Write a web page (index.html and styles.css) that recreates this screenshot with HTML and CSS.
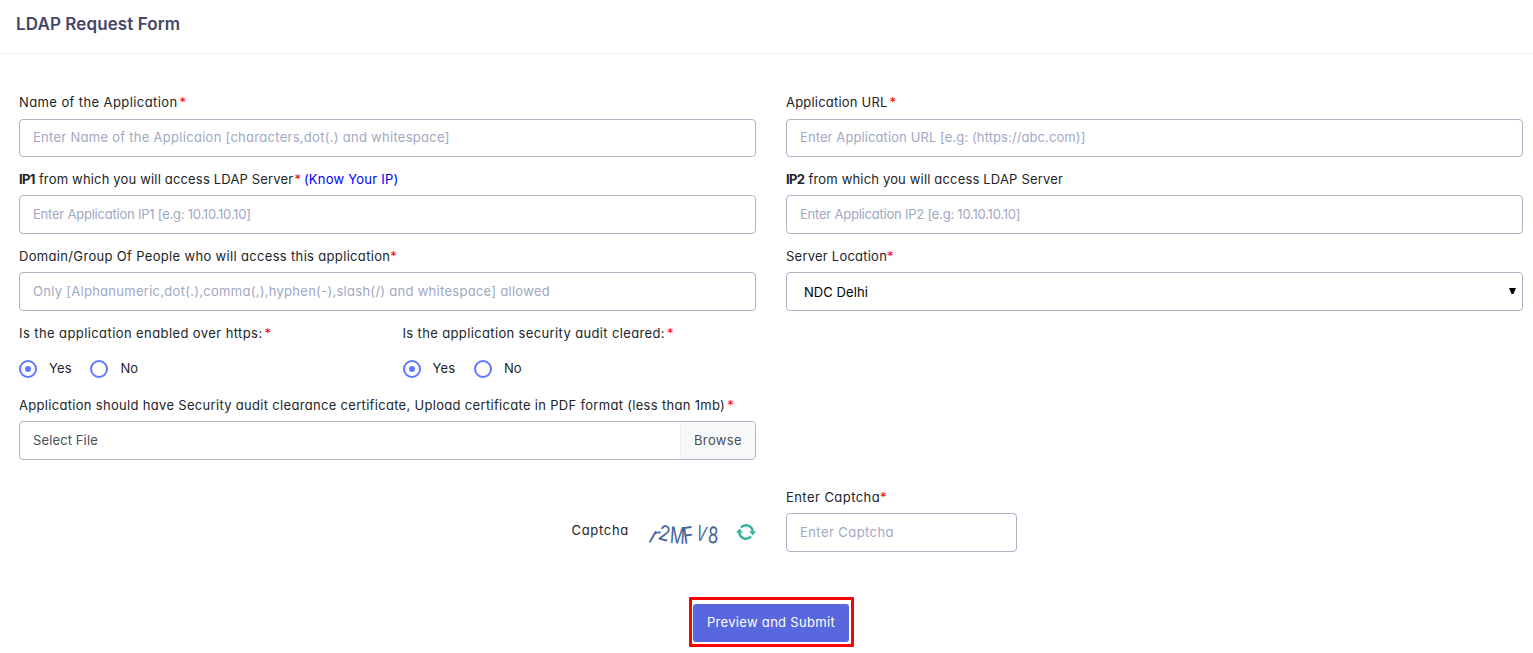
FILE: index.html
```html
<!DOCTYPE html>
<html lang="en">
<head>
<meta charset="utf-8">
<title>LDAP Request Form</title>
<link rel="stylesheet" href="styles.css">
</head>
<body>
<header class="page-header"><h1 class="page-title">LDAP Request Form</h1></header>
<form class="form">
  <div class="row">
    <div class="field">
      <label class="label tall name-label"><span>Name of the Application</span><i class="req spaced">*</i></label>
      <input class="control short name-input" placeholder="Enter Name of the Applicaion [characters,dot(.) and whitespace]">
    </div>
    <div class="field">
      <label class="label tall url-label"><span>Application URL</span><i class="req spaced">*</i></label>
      <input class="control short url-input" placeholder="Enter Application URL [e.g: (https://abc.com)]">
    </div>
  </div>
  <div class="row">
    <div class="field">
      <label class="label ip-label"><b>IP1</b><span>from which you will access LDAP Server</span><i class="req ip-req">*</i><a class="ip-link">(Know Your IP)</a></label>
      <input class="control ip-input" placeholder="Enter Application IP1 [e.g: 10.10.10.10]">
    </div>
    <div class="field">
      <label class="label ip-label"><b>IP2</b><span>from which you will access LDAP Server</span></label>
      <input class="control ip-input" placeholder="Enter Application IP2 [e.g: 10.10.10.10]">
    </div>
  </div>
  <div class="row">
    <div class="field">
      <label class="label domain-label"><span>Domain/Group Of People who will access this application</span><i class="req">*</i></label>
      <input class="control name-input" placeholder="Only [Alphanumeric,dot(.),comma(,),hyphen(-),slash(/) and whitespace] allowed">
    </div>
    <div class="field">
      <label class="label location-label"><span>Server Location</span><i class="req">*</i></label>
      <div class="control select"><span>NDC Delhi</span><svg class="caret" width="7" height="6" viewBox="0 0 7 6"><path d="M0 0H7L4.4 6H2.6Z"/></svg></div>
    </div>
  </div>
  <div class="row questions">
    <div class="question">
      <label class="label https-label"><span>Is the application enabled over https:</span><i class="req spaced">*</i></label>
      <div class="radios">
        <label class="radio"><span class="ring on"></span><span class="choice">Yes</span></label>
        <label class="radio"><span class="ring"></span><span class="choice">No</span></label>
      </div>
    </div>
    <div class="question">
      <label class="label audit-label"><span>Is the application security audit cleared:</span><i class="req spaced">*</i></label>
      <div class="radios">
        <label class="radio"><span class="ring on"></span><span class="choice">Yes</span></label>
        <label class="radio"><span class="ring"></span><span class="choice">No</span></label>
      </div>
    </div>
  </div>
  <div class="row">
    <div class="field">
      <label class="label file-label"><span>Application should have Security audit clearance certificate, Upload certificate in PDF format (less than 1mb)</span><i class="req spaced">*</i></label>
      <div class="control file"><span class="file-name">Select File</span><span class="browse">Browse</span></div>
    </div>
  </div>
  <div class="row captcha-row">
    <div class="field captcha">
      <span class="captcha-label">Captcha</span>
      <svg class="captcha-code" width="76" height="30" viewBox="0 0 76 30">
        <text transform="translate(1 23) rotate(8) skewX(-22) scale(.95 1)" font-size="22">r</text>
        <text transform="translate(11 20) rotate(14) scale(.9 1)" font-size="21">2</text>
        <text transform="translate(23.5 24) rotate(4) scale(.72 1)" font-size="23">M</text>
        <text transform="translate(38 25) rotate(-8) scale(.8 1)" font-size="23">F</text>
        <text transform="translate(49 20.5) rotate(14) scale(.68 1)" font-size="21">V</text>
        <text transform="translate(61.5 24) rotate(3) scale(.74 1)" font-size="23">8</text>
      </svg>
      <svg class="refresh" width="20" height="18" viewBox="0 0 20 18">
        <path class="arc" d="M5 4.6A6.7 6.7 0 0 1 16.7 8.6M15 13.4A6.7 6.7 0 0 1 3.3 9.4"/>
        <path class="tip" d="M0 9.8L3.4 5.6L6.8 9.8ZM20 8.2L16.6 12.4L13.2 8.2Z"/>
      </svg>
    </div>
    <div class="field">
      <label class="label captcha-input-label"><span>Enter Captcha</span><i class="req">*</i></label>
      <input class="control captcha-input" placeholder="Enter Captcha">
    </div>
  </div>
  <div class="actions"><div class="highlight"><button class="submit" type="button">Preview and Submit</button></div></div>
</form>
</body>
</html>
```
FILE: styles.css
```css
* { box-sizing: border-box; }
body {
  margin: 0;
  background: #fff;
  color: #212529;
  font: 400 13px/20px Inter, sans-serif;
  font-feature-settings: "cv11";
  overflow: hidden;
}
.page-header { height: 54px; padding: 12px 16px; border-bottom: 1px solid #ebedf2; }
.page-title { margin: 0; font-size: 17px; line-height: 24px; font-weight: 600; letter-spacing: .1px; color: #464766; }
.form { padding: 38px 10px 0 19px; }
.row { display: grid; grid-template-columns: 737px 737px; column-gap: 30px; margin-bottom: 12px; }
.label { display: flex; height: 26px; white-space: nowrap; letter-spacing: .23px; }
.label.tall { height: 27px; }
.req { color: #f00; font-style: normal; letter-spacing: 0; }
.spaced { margin-left: 2px; }
.name-label { letter-spacing: .4px; }
.url-label { letter-spacing: .2px; }
.ip-label { letter-spacing: .17px; }
.ip-label b { letter-spacing: -.6px; margin-right: 4px; }
.ip-req { margin-left: 1px; }
.ip-link { margin-left: 3px; color: #00f; letter-spacing: .22px; }
.domain-label { letter-spacing: .33px; }
.https-label { letter-spacing: .41px; }
.audit-label { letter-spacing: .36px; }
.file-label { letter-spacing: .31px; }
.captcha-input-label { letter-spacing: .44px; }
.control {
  display: block;
  width: 100%;
  height: 39px;
  padding: 0 13px;
  border: 1px solid #afb2c5;
  border-radius: 4px;
  background: #fff;
  color: #495057;
  font: inherit;
  font-feature-settings: inherit;
}
.control.short { height: 38px; }
.control::placeholder { color: #a1a8c3; opacity: 1; }
.name-input { letter-spacing: .28px; padding-bottom: 2px; }
.url-input { letter-spacing: .1px; padding-bottom: 2px; }
.ip-input { letter-spacing: -.22px; padding-bottom: 1px; }
.select { display: flex; align-items: center; justify-content: space-between; padding: 1px 6px 0 17px; color: #000; letter-spacing: .07px; }
.caret { margin-top: -3px; }
.questions { grid-template-columns: 383.5px 383.5px; column-gap: 0; margin-bottom: 17px; }
.question .label { height: 37px; }
.radios { display: flex; gap: 18.5px; height: 18px; }
.radio { display: flex; align-items: center; gap: 12px; }
.choice { margin-top: -2px; letter-spacing: .2px; }
.ring { display: flex; align-items: center; justify-content: center; width: 18px; height: 18px; border: 2px solid #5d78ff; border-radius: 50%; }
.ring.on::after { content: ""; width: 6px; height: 6px; border-radius: 50%; background: #5d78ff; }
.file { display: flex; align-items: stretch; padding: 0; line-height: 36px; overflow: hidden; }
.file-name { flex: 1; padding-left: 13px; letter-spacing: .12px; }
.browse { width: 75px; padding-left: 13px; border-left: 1px solid #ebedf2; background: #f7f8fa; letter-spacing: .36px; }
.captcha-row { margin: 27px 0 45px; }
.captcha { display: flex; justify-content: flex-end; align-items: flex-start; padding-top: 33px; }
.captcha-label { letter-spacing: .7px; margin-right: 17px; }
.captcha-code { width: 76px; height: 30px; margin-right: 14px; margin-top: -1px; fill: #42649a; font-family: Inter, sans-serif; font-weight: 400; overflow: visible; }
.refresh { margin-top: 3px; }
.arc { fill: none; stroke: #35b39a; stroke-width: 2.4; }
.tip { fill: #35b39a; }
.captcha-input { width: 231px; letter-spacing: .43px; padding-bottom: 1px; }
.actions { display: flex; padding-left: 670px; }
.highlight { width: 165px; height: 50px; padding: 4px 2px 2px 1px; border: 3px solid #f00; border-radius: 1px; }
.submit { width: 156px; height: 38px; padding: 0 0 2px; border: 0; border-radius: 3px; background: #5867dd; color: #fff; font: inherit; font-feature-settings: inherit; letter-spacing: .31px; }
```
